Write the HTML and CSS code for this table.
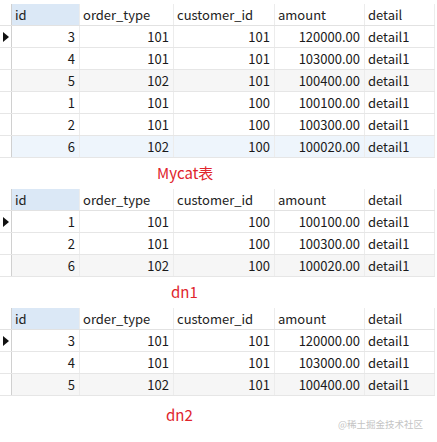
FILE: index.html
```html
<!DOCTYPE html>
<html>
<head>
<meta charset="utf-8">
<link rel="stylesheet" href="styles.css">
</head>
<body>
<div class="page">
  <div class="grid">
    <div class="row head"><div class="g"></div><div class="c h sel">id</div><div class="c h">order_type</div><div class="c h">customer_id</div><div class="c h">amount</div><div class="c h">detail</div></div>
    <div class="row"><div class="g"><span class="tri"></span></div><div class="c n">3</div><div class="c n">101</div><div class="c n">101</div><div class="c n">120000.00</div><div class="c">detail1</div></div>
    <div class="row"><div class="g"></div><div class="c n">4</div><div class="c n">101</div><div class="c n">101</div><div class="c n">103000.00</div><div class="c">detail1</div></div>
    <div class="row alt"><div class="g"></div><div class="c n">5</div><div class="c n">102</div><div class="c n">101</div><div class="c n">100400.00</div><div class="c">detail1</div></div>
    <div class="row"><div class="g"></div><div class="c n">1</div><div class="c n">101</div><div class="c n">100</div><div class="c n">100100.00</div><div class="c">detail1</div></div>
    <div class="row"><div class="g"></div><div class="c n">2</div><div class="c n">101</div><div class="c n">100</div><div class="c n">100300.00</div><div class="c">detail1</div></div>
    <div class="row hl"><div class="g"></div><div class="c n">6</div><div class="c n">102</div><div class="c n">100</div><div class="c n">100020.00</div><div class="c">detail1</div></div>
  </div>
  <div class="label l1">Mycat表</div>

  <div class="grid">
    <div class="row head"><div class="g"></div><div class="c h sel">id</div><div class="c h">order_type</div><div class="c h">customer_id</div><div class="c h">amount</div><div class="c h">detail</div></div>
    <div class="row"><div class="g"><span class="tri"></span></div><div class="c n">1</div><div class="c n">101</div><div class="c n">100</div><div class="c n">100100.00</div><div class="c">detail1</div></div>
    <div class="row"><div class="g"></div><div class="c n">2</div><div class="c n">101</div><div class="c n">100</div><div class="c n">100300.00</div><div class="c">detail1</div></div>
    <div class="row alt"><div class="g"></div><div class="c n">6</div><div class="c n">102</div><div class="c n">100</div><div class="c n">100020.00</div><div class="c">detail1</div></div>
  </div>
  <div class="label l2">dn1</div>

  <div class="grid">
    <div class="row head"><div class="g"></div><div class="c h sel">id</div><div class="c h">order_type</div><div class="c h">customer_id</div><div class="c h">amount</div><div class="c h">detail</div></div>
    <div class="row"><div class="g"><span class="tri"></span></div><div class="c n">3</div><div class="c n">101</div><div class="c n">101</div><div class="c n">120000.00</div><div class="c">detail1</div></div>
    <div class="row"><div class="g"></div><div class="c n">4</div><div class="c n">101</div><div class="c n">101</div><div class="c n">103000.00</div><div class="c">detail1</div></div>
    <div class="row alt"><div class="g"></div><div class="c n">5</div><div class="c n">102</div><div class="c n">101</div><div class="c n">100400.00</div><div class="c">detail1</div></div>
  </div>
  <div class="foot">
    <div class="label l3">dn2</div>
    <div class="mark">@稀土掘金技术社区</div>
  </div>
</div>
</body>
</html>
```

FILE: styles.css
```css
html, body {
  margin: 0;
  padding: 0;
  background: #ffffff;
}
.page {
  padding-top: 4px;
  font-family: "Noto Sans CJK SC", "Noto Sans", sans-serif;
  font-size: 13px;
  color: #1a1a1a;
  width: 437px;
}
.grid {
  display: flex;
  flex-direction: column;
  width: 435px;
}
.row {
  display: grid;
  grid-template-columns: 12px 68px 94px 101px 90px 70px;
  height: 22px;
  border-bottom: 1px solid #e6e6e6;
  box-sizing: border-box;
}
.row.head {
  height: 22px;
  border-bottom: 1px solid #e2e2e2;
}
.row.alt .c {
  background: #f6f6f6;
}
.row.hl .c {
  background: #eef5fc;
}
.g {
  border-right: 1px solid #d0d0d0;
  display: flex;
  align-items: center;
  justify-content: flex-start;
  padding-left: 3px;
  box-sizing: border-box;
}
.tri {
  width: 0;
  height: 0;
  border-top: 5px solid transparent;
  border-bottom: 5px solid transparent;
  border-left: 6px solid #111;
}
.c {
  border-right: 1px solid #ececec;
  box-sizing: border-box;
  padding: 0 4px 0 3px;
  line-height: 21px;
  white-space: nowrap;
  overflow: hidden;
}
.c.h {
  color: #222;
}
.c.sel {
  background: #dbe8f6;
}
.c.n {
  text-align: right;
}
.label {
  color: #e0242c;
  font-size: 15px;
  line-height: 30px;
  height: 31px;
}
.l1 { padding-left: 157px; }
.l2 { padding-left: 171px; }
.foot {
  display: flex;
  flex-direction: column;
}
.l3 {
  padding-left: 166px;
  padding-top: 5px;
  line-height: 28px;
  height: auto;
}
.mark {
  align-self: flex-end;
  margin-right: 14px;
  margin-top: -12px;
  font-size: 9.5px;
  color: #c4c4c4;
}
```
